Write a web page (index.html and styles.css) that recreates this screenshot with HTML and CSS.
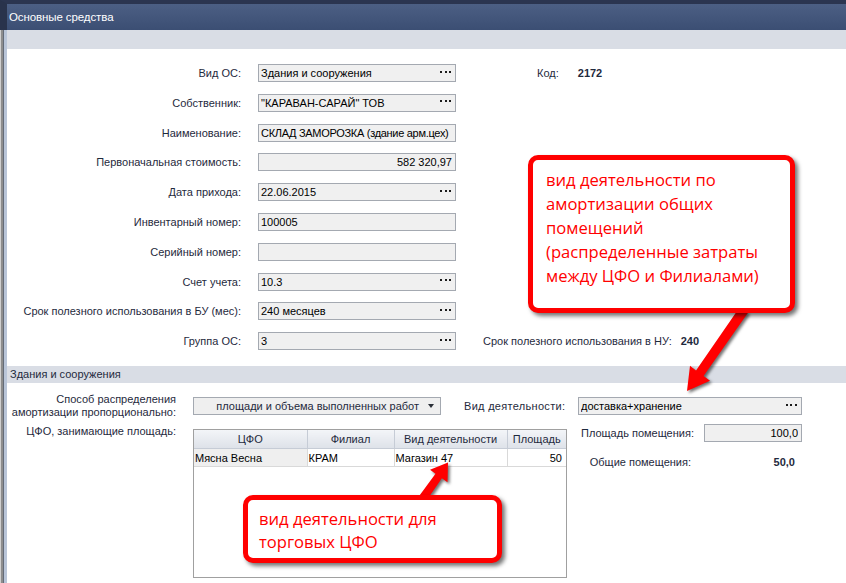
FILE: index.html
```html
<!DOCTYPE html>
<html lang="ru">
<head>
<meta charset="utf-8">
<title>Основные средства</title>
<link rel="stylesheet" href="styles.css">
</head>
<body>
<div class="window">
  <div class="titlebar"><span class="title">Основные средства</span></div>
  <div class="body">
    <div class="strip"></div>
    <div class="content">
      <div class="toolband"></div>
      <div class="form">
        <div class="lbl">Вид ОС:</div>
        <div class="field"><span class="val">Здания и сооружения</span><span class="dots"></span></div>
        <div class="side code"><span>Код:</span><b>2172</b></div>

        <div class="lbl">Собственник:</div>
        <div class="field"><span class="val">"КАРАВАН-САРАЙ" ТОВ</span><span class="dots"></span></div>

        <div class="lbl">Наименование:</div>
        <div class="field"><span class="val tight">СКЛАД ЗАМОРОЗКА (здание арм.цех)</span></div>

        <div class="lbl">Первоначальная стоимость:</div>
        <div class="field num"><span class="val">582 320,97</span></div>

        <div class="lbl">Дата прихода:</div>
        <div class="field"><span class="val">22.06.2015</span><span class="dots"></span></div>

        <div class="lbl">Инвентарный номер:</div>
        <div class="field"><span class="val">100005</span></div>

        <div class="lbl">Серийный номер:</div>
        <div class="field"><span class="val"></span></div>

        <div class="lbl">Счет учета:</div>
        <div class="field"><span class="val">10.3</span><span class="dots"></span></div>

        <div class="lbl">Срок полезного использования в БУ (мес):</div>
        <div class="field"><span class="val">240 месяцев</span><span class="dots"></span></div>

        <div class="lbl">Группа ОС:</div>
        <div class="field"><span class="val">3</span><span class="dots"></span></div>
        <div class="side nu"><span>Срок полезного использования в НУ:</span><b>240</b></div>
      </div>

      <div class="section-head">Здания и сооружения</div>

      <div class="section">
        <div class="row-a">
          <div class="sec-lbl">Способ распределения<br>амортизации пропорционально:</div>
          <div class="combo"><span class="combo-text">площади и объема выполненных работ</span><span class="caret"></span></div>
          <div class="act-lbl">Вид деятельности:</div>
          <div class="field act"><span class="val">доставка+хранение</span><span class="dots"></span></div>
        </div>
        <div class="row-b">
          <div class="sec-lbl">ЦФО, занимающие площадь:</div>
          <div class="grid-box">
            <table class="grid">
              <colgroup><col class="c1"><col class="c2"><col class="c3"><col class="c4"></colgroup>
              <thead>
                <tr><th>ЦФО</th><th>Филиал</th><th>Вид деятельности</th><th>Площадь</th></tr>
              </thead>
              <tbody>
                <tr><td class="sel">Мясна Весна</td><td>КРАМ</td><td>Магазин 47</td><td class="r">50</td></tr>
              </tbody>
            </table>
          </div>
          <div class="right-col">
            <div class="rc-row">
              <div class="rc-lbl">Площадь помещения:</div>
              <div class="field num area"><span class="val">100,0</span></div>
            </div>
            <div class="rc-row">
              <div class="rc-lbl right">Общие помещения:</div>
              <div class="rc-val">50,0</div>
            </div>
          </div>
        </div>
      </div>
    </div>
  </div>

  <svg class="arrows" width="846" height="583" viewBox="0 0 846 583">
    <polygon fill="#ff0000" points="740,306.8 748,312.8 703.6,376 710,380.8 687,391 690,365.8 696,370.6"/>
    <polygon fill="#ff0000" points="426.5,500.5 441.9,478.3 447.5,482.2 448,462.5 430,469.8 435.5,473.7 419.5,495.5"/>
  </svg>

  <div class="callout callout-1">вид деятельности по<br>амортизации общих<br>помещений<br>(распределенные затраты<br>между ЦФО и Филиалами)</div>
  <div class="callout callout-2">вид деятельности для<br>торговых ЦФО</div>
</div>
</body>
</html>
```

FILE: styles.css
```css
* { box-sizing: border-box; }

html, body {
  margin: 0;
  padding: 0;
  background: #ffffff;
}

body {
  font-family: "Liberation Sans", Arial, sans-serif;
  font-size: 11px;
  color: #1f2a3d;
}

.window {
  position: relative;
  width: 846px;
  height: 583px;
  overflow: hidden;
  display: flex;
  flex-direction: column;
  background: #ffffff;
}

.titlebar {
  height: 30px;
  flex: none;
  border-top: 4px solid #2b3550;
  border-left: 7px solid #29334c;
  background: linear-gradient(#4c5f84, #3b4e73);
  display: flex;
  align-items: center;
  padding-left: 2px;
}

.title {
  color: #ffffff;
  font-size: 11.5px;
  letter-spacing: -0.1px;
}

.body {
  flex: 1;
  display: flex;
}

.strip {
  width: 7px;
  flex: none;
  background: linear-gradient(to right, #cfcfcf 0 1px, #8d8d8d 1px 2.7px, #646c78 2.7px 4px, #b9c5d8 4px 7px);
}

.content {
  flex: 1;
  display: flex;
  flex-direction: column;
}

.toolband {
  height: 19px;
  background: #d9dde5;
}

.form {
  display: grid;
  grid-template-columns: 234px 198px 1fr;
  grid-auto-rows: 18px;
  column-gap: 17px;
  row-gap: 11.8px;
  padding-top: 15px;
}

.lbl {
  grid-column: 1;
  text-align: right;
  align-self: center;
  white-space: nowrap;
  line-height: 13px;
  padding-top: 1px;
}

.field {
  height: 18px;
  border: 1px solid #a4a9b1;
  background: #f0f0f0;
  display: flex;
  align-items: center;
  padding: 0 3px 0 2px;
  color: #000000;
  overflow: hidden;
}

.field .val {
  flex: 1;
  white-space: nowrap;
  overflow: hidden;
  line-height: 14px;
}

.field .val.tight {
  letter-spacing: -0.3px;
}

.field.num .val {
  text-align: right;
}

.dots {
  flex: none;
  width: 11px;
  height: 2px;
  margin-right: 1px;
  margin-bottom: 3px;
  background: linear-gradient(to right, #1c1c1c 0 2px, transparent 2px 4.5px, #1c1c1c 4.5px 6.5px, transparent 6.5px 9px, #1c1c1c 9px 11px);
}

.side {
  align-self: center;
  display: flex;
  white-space: nowrap;
  line-height: 13px;
}

.side b {
  font-weight: bold;
}

.side.code {
  padding-left: 64px;
  gap: 19px;
}

.side.nu {
  padding-left: 10px;
  gap: 9px;
}

.section-head {
  margin-top: 16px;
  height: 17px;
  line-height: 17px;
  background: #d9dde5;
  padding-left: 3px;
}

.section {
  padding-top: 10px;
  display: flex;
  flex-direction: column;
}

.row-a {
  display: flex;
  align-items: center;
}

.sec-lbl {
  width: 169px;
  flex: none;
  text-align: right;
  line-height: 13px;
  white-space: nowrap;
}

.combo {
  margin-left: 17px;
  width: 248px;
  height: 18px;
  flex: none;
  border: 1px solid #a4a9b1;
  background: #efefef;
  display: flex;
  align-items: center;
  justify-content: flex-end;
  padding-right: 6px;
  color: #1f2a3d;
}

.combo-text {
  margin-right: 9px;
  white-space: nowrap;
}

.caret {
  width: 0;
  height: 0;
  border-left: 3.5px solid transparent;
  border-right: 3.5px solid transparent;
  border-top: 4px solid #2a2f38;
}

.act-lbl {
  margin-left: 23px;
  width: 97px;
  flex: none;
  white-space: nowrap;
  letter-spacing: 0.3px;
}

.field.act {
  margin-left: 17px;
  width: 224px;
  flex: none;
}

.row-b {
  margin-top: 5px;
  display: flex;
  align-items: flex-start;
}

.row-b .sec-lbl {
  padding-top: 1px;
}

.grid-box {
  margin-left: 17px;
  margin-top: 4.5px;
  width: 374px;
  height: 149px;
  flex: none;
  border: 1px solid #a0a0a0;
  background: #ffffff;
}

.grid {
  width: 372px;
  table-layout: fixed;
  border-collapse: collapse;
}

.grid col.c1 { width: 113px; }
.grid col.c2 { width: 87px; }
.grid col.c3 { width: 113px; }
.grid col.c4 { width: 59px; }

.grid th {
  height: 19px;
  padding: 0;
  font-weight: normal;
  text-align: center;
  background: linear-gradient(#f3f5f8, #dee2e9);
  border-right: 1px solid #c6ccd6;
  border-bottom: 1px solid #c6ccd6;
  color: #1f2a3d;
  white-space: nowrap;
}

.grid td {
  height: 18px;
  padding: 0 0 0 1px;
  border-right: 1px solid #d9d9d9;
  border-bottom: 1px solid #d9d9d9;
  color: #000000;
  white-space: nowrap;
  overflow: hidden;
}

.grid th:last-child,
.grid td:last-child {
  border-right: none;
}

.grid td.sel {
  background: #efefef;
}

.grid td.r {
  text-align: right;
  padding-right: 4px;
}

.right-col {
  margin-left: 14px;
  display: flex;
  flex-direction: column;
  gap: 11px;
}

.rc-row {
  display: flex;
  align-items: center;
  height: 18px;
}

.rc-lbl {
  width: 110px;
  flex: none;
  white-space: nowrap;
}

.rc-lbl.right {
  text-align: right;
}

.field.area {
  margin-left: 13px;
  width: 98px;
  flex: none;
}

.rc-val {
  margin-left: 13px;
  width: 91px;
  text-align: right;
  font-weight: bold;
  color: #1f2a3d;
}

.arrows {
  position: absolute;
  left: 0;
  top: 0;
  pointer-events: none;
  filter: drop-shadow(2px 2px 1.5px rgba(0, 0, 0, 0.55));
}

.callout {
  position: absolute;
  border: 5px solid #ff0000;
  border-radius: 10px;
  background: #ffffff;
  box-shadow: 3px 3px 4px rgba(0, 0, 0, 0.55);
  color: #ff0000;
  font-family: "Open Sans", "Liberation Sans", sans-serif;
  font-size: 16.6px;
  white-space: nowrap;
}

.callout-1 {
  left: 528px;
  top: 155px;
  width: 267px;
  height: 158px;
  padding: 8px 0 0 13px;
  line-height: 24px;
}

.callout-2 {
  left: 243px;
  top: 495px;
  width: 259px;
  height: 68px;
  padding: 7px 0 0 11px;
  line-height: 23px;
}
```
